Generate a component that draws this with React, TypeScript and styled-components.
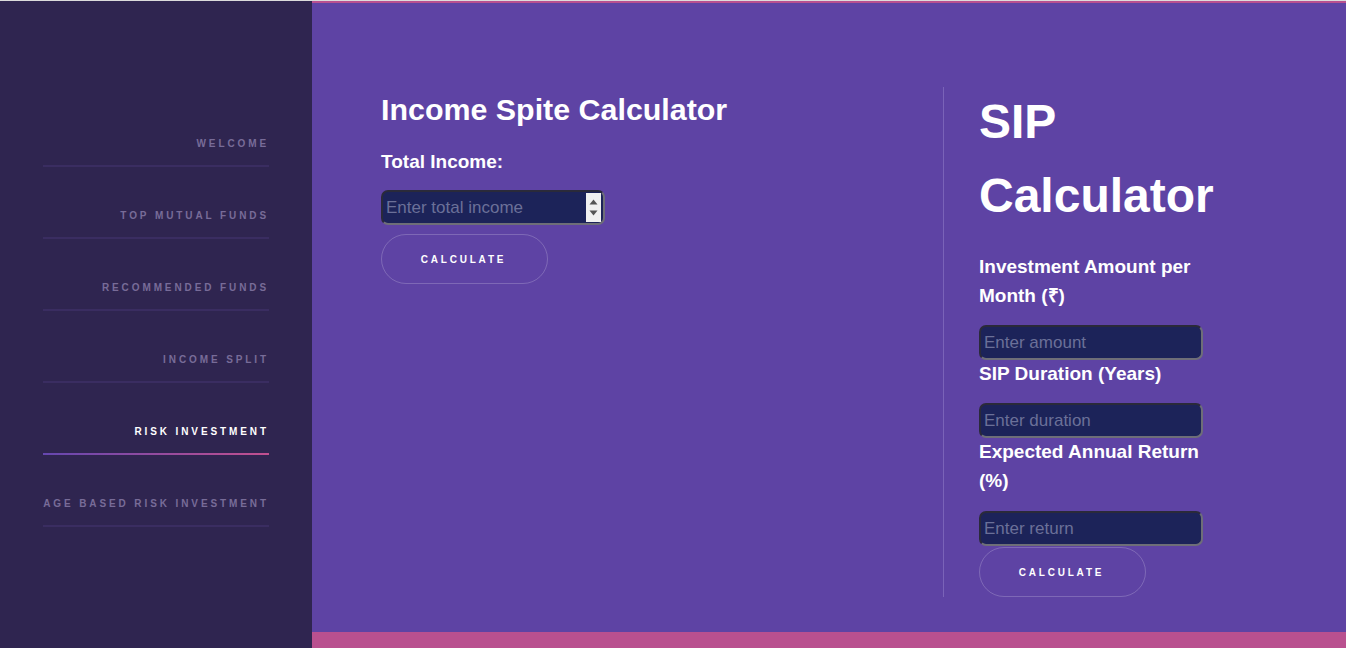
import React from 'react';
import styled, { createGlobalStyle } from 'styled-components';

const GlobalStyle = createGlobalStyle`
  html, body { margin: 0; padding: 0; }
  body {
    font-family: "Liberation Sans", Arial, sans-serif;
    background: #2f2550;
  }
  * { box-sizing: border-box; }
`;

const Page = styled.div`
  display: flex;
  height: 648px;
  border-top: 1px solid #dcdcdc;
`;

const Sidebar = styled.nav`
  width: 312px;
  flex-shrink: 0;
  background: #2f2550;
  padding: 94px 43px 0;
`;

const NavList = styled.ul`
  list-style: none;
  margin: 0;
  padding: 0;
`;

const NavItem = styled.li<{ $active?: boolean }>`
  padding: 43px 0 15px;
  line-height: 12px;
  text-align: right;
  white-space: nowrap;
  font-size: 10px;
  font-weight: 700;
  letter-spacing: 2.9px;
  text-transform: uppercase;
  color: ${(p) => (p.$active ? '#ffffff' : '#786c98')};
  border-bottom: 2px solid #3a2d61;
  ${(p) =>
    p.$active &&
    `border-image: linear-gradient(90deg, #6547b0, #c2508f) 1;`}
`;

const NavLabel = styled.span`
  margin-right: 0;
`;

const Main = styled.main`
  flex: 1;
  display: flex;
  flex-direction: column;
  background: #5e43a4;
  border-top: 2px solid #b9508f;
`;

const Content = styled.div`
  flex: 1;
  display: flex;
  align-items: flex-start;
  padding: 84px 0 0 69px;
`;

const FooterBar = styled.div`
  height: 16px;
  background: #b9508f;
`;

const LeftPanel = styled.section`
  width: 562px;
  display: flex;
  flex-direction: column;
  align-items: flex-start;
`;

const RightPanel = styled.section`
  width: 276px;
  padding-left: 35px;
  border-left: 1px solid #7a63b8;
  display: flex;
  flex-direction: column;
  align-items: flex-start;
`;

const Heading = styled.h2`
  margin: 5px 0 0;
  font-size: 30.4px;
  line-height: 35px;
  font-weight: 700;
  color: #ffffff;
`;

const BigHeading = styled.h1`
  margin: -2px 0 0;
  font-size: 48px;
  line-height: 74px;
  font-weight: 700;
  color: #ffffff;
`;

const Label = styled.label<{ $top?: number; $bottom?: number }>`
  display: block;
  margin-top: ${(p) => p.$top ?? -2}px;
  margin-bottom: ${(p) => p.$bottom ?? 15}px;
  font-size: 19px;
  line-height: 29px;
  font-weight: 700;
  color: #ffffff;
`;

const InputWrap = styled.div<{ $bottom?: number }>`
  position: relative;
  width: 224px;
  height: 35px;
  margin-bottom: ${(p) => p.$bottom ?? 1}px;
`;

const Field = styled.input`
  width: 100%;
  height: 100%;
  padding: 0 3px;
  font-family: "Liberation Sans", Arial, sans-serif;
  font-size: 17px;
  color: #ffffff;
  background: #1c2359;
  border-width: 2px;
  border-style: solid;
  border-color: #2a2a3a #6e6e78 #6e6e78 #2a2a3a;
  border-radius: 7px;
  outline: none;
  &::placeholder {
    color: #6b7098;
  }
`;

const Spinner = styled.div`
  position: absolute;
  top: 3px;
  bottom: 3px;
  right: 4px;
  width: 15px;
  background: #f1f1f1;
  display: flex;
  flex-direction: column;
  align-items: center;
  justify-content: space-around;
  padding: 3px 0;
`;

const CalcButton = styled.button<{ $top?: number }>`
  margin-top: ${(p) => p.$top ?? 0}px;
  width: 167px;
  height: 50px;
  border: 1px solid rgba(255, 255, 255, 0.2);
  border-radius: 25px;
  background: transparent;
  color: #ffffff;
  font-family: "Liberation Sans", Arial, sans-serif;
  font-size: 10px;
  font-weight: 700;
  letter-spacing: 2.8px;
  text-transform: uppercase;
  padding: 0 2px 0 0;
  cursor: pointer;
`;

const Arrow = ({ up }: { up?: boolean }) => (
  <svg width="9" height="6" viewBox="0 0 9 6">
    <path d={up ? 'M0.5 5.5 L4.5 0.5 L8.5 5.5 Z' : 'M0.5 0.5 L4.5 5.5 L8.5 0.5 Z'} fill="#555" />
  </svg>
);

const navItems = [
  'Welcome',
  'Top Mutual Funds',
  'Recommended Funds',
  'Income Split',
  'Risk Investment',
  'Age Based Risk Investment',
];

export default function App() {
  return (
    <>
      <GlobalStyle />
      <Page>
        <Sidebar>
          <NavList>
            {navItems.map((item) => (
              <NavItem key={item} $active={item === 'Risk Investment'}>
                <NavLabel>{item}</NavLabel>
              </NavItem>
            ))}
          </NavList>
        </Sidebar>
        <Main>
          <Content>
            <LeftPanel>
              <Heading>Income Spite Calculator</Heading>
              <Label $top={20} $bottom={14}>Total Income:</Label>
              <InputWrap $bottom={9}>
                <Field type="text" placeholder="Enter total income" />
                <Spinner>
                  <Arrow up />
                  <Arrow />
                </Spinner>
              </InputWrap>
              <CalcButton>Calculate</CalcButton>
            </LeftPanel>
            <RightPanel>
              <BigHeading>SIP Calculator</BigHeading>
              <Label $top={19}>Investment Amount per Month (₹)</Label>
              <InputWrap>
                <Field type="text" placeholder="Enter amount" />
              </InputWrap>
              <Label>SIP Duration (Years)</Label>
              <InputWrap>
                <Field type="text" placeholder="Enter duration" />
              </InputWrap>
              <Label $bottom={16}>Expected Annual Return (%)</Label>
              <InputWrap>
                <Field type="text" placeholder="Enter return" />
              </InputWrap>
              <CalcButton>Calculate</CalcButton>
            </RightPanel>
          </Content>
          <FooterBar />
        </Main>
      </Page>
    </>
  );
}
